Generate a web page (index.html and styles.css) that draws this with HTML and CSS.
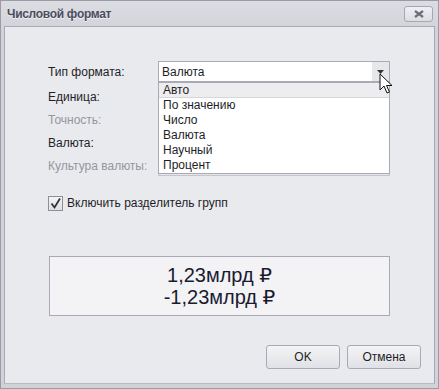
FILE: index.html
```html
<!DOCTYPE html>
<html lang="ru">
<head>
    <meta charset="UTF-8">
    <title>Числовой формат</title>
    <link rel="stylesheet" href="styles.css">
</head>
<body>
    <div class="window">
        <div class="titlebar">
            <span class="title">Числовой формат</span>
            <div class="close-btn">
                <svg width="12" height="8" viewBox="0 0 12 8"><path d="M2 1 L10 7 M10 1 L2 7" stroke="#6e6e7a" stroke-width="2.2"/></svg>
            </div>
        </div>
        <div class="panel">
            <div class="form">
                <div class="row first">
                    <label class="lbl">Тип формата:</label>
                    <div class="combo-wrap">
                        <div class="combo">
                            <span class="combo-text">Валюта</span>
                            <span class="combo-arrow">
                                <svg width="7" height="4" viewBox="0 0 7 4"><path d="M0 0 H7 L3.5 4 Z" fill="#333"/></svg>
                            </span>
                        </div>
                        <div class="dropdown">
                            <div class="item selected">Авто</div>
                            <div class="item">По значению</div>
                            <div class="item">Число</div>
                            <div class="item">Валюта</div>
                            <div class="item">Научный</div>
                            <div class="item">Процент</div>
                        </div>
                        <svg class="cursor" width="14" height="22" viewBox="0 0 14 22">
                            <path d="M1 1 V17 L5 13 L8 20 L10.5 19 L7.5 12.5 L13 12.5 Z" fill="#fff" stroke="#111" stroke-width="1"/>
                        </svg>
                    </div>
                </div>
                <div class="row">
                    <label class="lbl">Единица:</label>
                    <div class="editor"></div>
                </div>
                <div class="row">
                    <label class="lbl muted">Точность:</label>
                    <div class="editor disabled"></div>
                </div>
                <div class="row">
                    <label class="lbl">Валюта:</label>
                    <div class="editor"></div>
                </div>
                <div class="row">
                    <label class="lbl muted">Культура валюты:</label>
                    <div class="editor disabled"></div>
                </div>
                <div class="check-row">
                    <span class="checkbox">
                        <svg width="13" height="13" viewBox="0 0 13 13"><path d="M2.5 6.5 L5.5 10.5 L11 1.5" fill="none" stroke="#333" stroke-width="1.8"/></svg>
                    </span>
                    <span>Включить разделитель групп</span>
                </div>
            </div>
            <div class="preview">
                <div>1,23млрд ₽</div>
                <div>-1,23млрд ₽</div>
            </div>
            <div class="buttons">
                <div class="btn">OK</div>
                <div class="btn">Отмена</div>
            </div>
        </div>
    </div>
</body>
</html>
```

FILE: styles.css
```css
body {
    margin: 0;
    font-family: "Liberation Sans", "DejaVu Sans", sans-serif;
    font-size: 12px;
    color: #1e1e28;
}
.window {
    width: 439px;
    height: 389px;
    box-sizing: border-box;
    border: 1px solid #9a9ba6;
    background: linear-gradient(#dcdde2, #d2d3d9 30px, #d2d3d9);
    display: flex;
    flex-direction: column;
}
.titlebar {
    height: 25px;
    display: flex;
    align-items: center;
    justify-content: space-between;
    padding: 0 5px 0 6px;
}
.title {
    font-weight: bold;
    font-size: 12px;
    color: #4b4c5e;
    text-shadow: 0 1px 0 #f2f2f5;
    letter-spacing: -0.3px;
}
.close-btn {
    width: 27px;
    height: 14px;
    border: 1px solid #a6a7b2;
    border-radius: 3px;
    background: linear-gradient(#f0f0f3, #dcdde2);
    display: flex;
    align-items: center;
    justify-content: center;
    margin-top: 1px;
}
.panel {
    margin: 0 3px;
    height: 358px;
    box-sizing: border-box;
    border: 1px solid #a9aab5;
    border-bottom-color: #b9bac3;
    background: #e9eaee;
    display: flex;
    flex-direction: column;
}
.form {
    padding: 34px 0 0 43px;
}
.row {
    display: flex;
    align-items: center;
    height: 21px;
    margin-bottom: 2px;
}
.row.first {
    margin-bottom: 4px;
}
.lbl {
    width: 110px;
    flex-shrink: 0;
}
.muted {
    color: #95959f;
}
.combo-wrap {
    position: relative;
    width: 232px;
}
.combo {
    height: 21px;
    box-sizing: border-box;
    border: 1px solid #a9aab5;
    background: #fff;
    display: flex;
    align-items: center;
}
.combo-text {
    flex: 1;
    padding-left: 3px;
}
.combo-arrow {
    width: 17px;
    height: 19px;
    display: flex;
    align-items: center;
    justify-content: center;
    background: #e6e7eb;
}
.dropdown {
    position: absolute;
    left: 0;
    top: 21px;
    width: 232px;
    box-sizing: border-box;
    border: 1px solid #a9aab5;
    background: #fff;
    z-index: 2;
}
.item {
    height: 15px;
    line-height: 15px;
    padding-left: 4px;
}
.item.selected {
    background: #ededf0;
    border-bottom: 1px solid #d6d7dd;
    height: 14px;
    line-height: 15px;
}
.cursor {
    position: absolute;
    left: 221px;
    top: 12px;
    z-index: 3;
}
.editor {
    width: 232px;
    height: 21px;
    box-sizing: border-box;
    border: 1px solid #a9aab5;
    background: #fff;
}
.editor.disabled {
    background: #e4e5e9;
    border-color: #c4c5cd;
}
.check-row {
    display: flex;
    align-items: center;
    gap: 4px;
    margin-top: 19px;
    height: 16px;
}
.checkbox {
    width: 13px;
    height: 13px;
    border: 1px solid #8e8f9a;
    background: linear-gradient(#f4f4f6, #dedfe4);
    display: flex;
    align-items: center;
    justify-content: center;
}
.preview {
    margin: 45px 0 0 44px;
    width: 341px;
    height: 60px;
    box-sizing: border-box;
    border: 1px solid #a9aab5;
    background: #f3f3f6;
    text-align: center;
    font-size: 20px;
    line-height: 22px;
    padding-top: 7px;
    color: #1a1a30;
}
.buttons {
    display: flex;
    justify-content: flex-end;
    gap: 7px;
    margin: 29px 13px 0 0;
}
.btn {
    width: 74px;
    height: 24px;
    box-sizing: border-box;
    border: 1px solid #a9aab5;
    border-radius: 3px;
    background: linear-gradient(#f4f4f6, #e0e1e6);
    display: flex;
    align-items: center;
    justify-content: center;
}
```
